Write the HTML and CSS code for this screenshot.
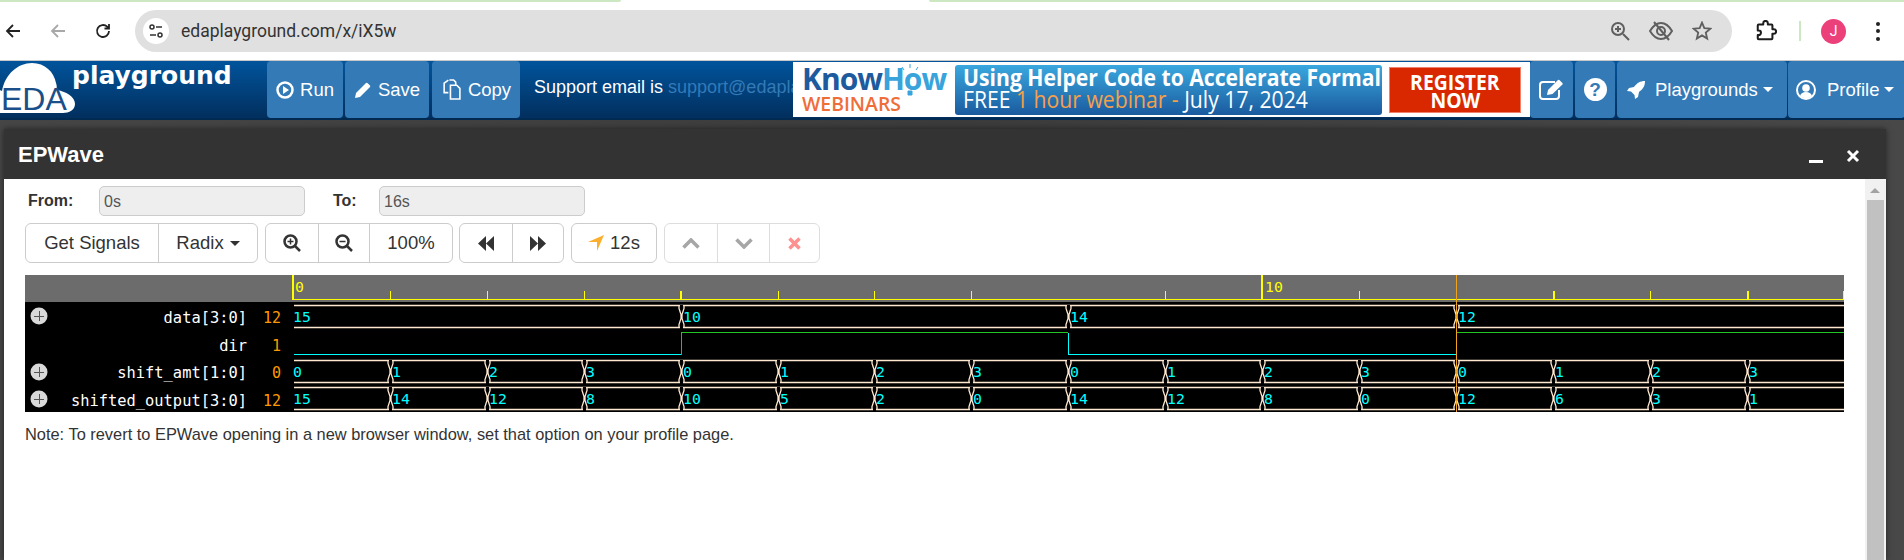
FILE: index.html
```html
<!DOCTYPE html>
<html lang="en">
<head>
<meta charset="utf-8">
<title>EPWave</title>
<link rel="stylesheet" href="styles.css">
</head>
<body>
<div class="strip"><span class="strip-l"></span><span class="strip-m"></span><span class="strip-r"></span></div>
<header class="toolbar">
  <svg class="tool" viewBox="0 0 18 18"><path d="M16 9H3M9 3L3 9l6 6" class="st-dark"/></svg>
  <svg class="tool" viewBox="0 0 18 18"><path d="M16 9H3M9 3L3 9l6 6" class="st-grey"/></svg>
  <svg class="tool" viewBox="0 0 18 18"><path d="M15 9a6 6 0 1 1-1.8-4.3L15 6.500M15 2v4.500h-4.500" class="st-dark"/></svg>
  <div class="omnibox">
    <span class="chip"><svg viewBox="0 0 16 16" width="16" height="16"><circle cx="4" cy="4" r="2" class="st-thin"/><path d="M8 4h6M2 12h6" class="st-thin"/><circle cx="12" cy="12" r="2" class="st-thin"/></svg></span>
    <span class="url">edaplayground.com/x/iX5w</span>
    <span class="omni-icons">
      <svg width="20" height="20" viewBox="0 0 20 20"><circle cx="8" cy="8" r="6" class="st-omni"/><path d="M13 13l6 6M8 5v6M5 8h6" class="st-omni"/></svg>
      <svg width="24" height="20" viewBox="0 0 24 20"><path d="M1 10c3-5 7-8 11-8s8 3 11 8c-3 5-7 8-11 8s-8-3-11-8z" class="st-omni"/><circle cx="12" cy="10" r="4" class="st-omni"/><path d="M5 1l15 18" class="st-omni"/></svg>
      <svg width="20" height="20" viewBox="0 0 24 24"><path d="M22 9.240l-7.190-.62L12 2 9.190 8.630 2 9.240l5.460 4.730L5.820 21 12 17.270 18.180 21l-1.630-7.030L22 9.240z" class="st-omni2"/></svg>
    </span>
  </div>
  <svg class="ext" viewBox="0 0 24 24"><path d="M9 5V3.500a2.500 2.500 0 0 1 5 0V5h4a1 1 0 0 1 1 1v4h1.500a2.500 2.500 0 0 1 0 5H19v5a1 1 0 0 1-1 1H4a1 1 0 0 1-1-1v-3.500h1a2.500 2.500 0 0 0 0-5H3V6a1 1 0 0 1 1-1z" class="st-ext"/></svg>
  <span class="divider"></span>
  <span class="avatar">J</span>
  <span class="dots"><i></i><i></i><i></i></span>
</header>

<nav class="nav">
  <div class="logo">
    <svg class="cloud" viewBox="0 0 76 52" width="76" height="52">
      <path d="M-6 51c-6-2-8-12-4-18 2-4 8-6 12-4C5 12 18 1 32 1c13 0 22 9 24 20 1 3 1 5 0 7 10 1 19 7 19 14 0 6-6 9-12 9z" class="cloud-fill"/>
      <text x="1" y="48" class="eda">EDA</text>
    </svg>
    <span class="wordmark">playground</span>
  </div>
  <a class="nav-btn run"><svg width="18" height="18" viewBox="0 0 18 18"><circle cx="9" cy="9" r="7.500" class="st-white-b"/><path d="M7 5l6 4-6 4z" class="fl-white"/></svg>Run</a>
  <a class="nav-btn save"><svg width="18" height="18" viewBox="0 0 18 18"><path d="M1 17l1-5L12 2a1 1 0 0 1 1.400 0l2.600 2.600a1 1 0 0 1 0 1.400L6 16z" class="fl-white"/></svg>Save</a>
  <a class="nav-btn copy"><svg width="21" height="21" viewBox="0 0 20 20"><path d="M8 1h4l2 2v3M7 1L3 4v9h4" class="st-white1"/><path d="M9 6h6l3 3v10H9z" class="st-white1"/></svg>Copy</a>
  <div class="support">Support email is <a class="support-link">support@edapla</a></div>
  <div class="banner">
    <div class="brand">
      <div class="knowhow">Know<b>How</b>
        <svg class="bulb" viewBox="0 0 24 34" width="24" height="34"><path d="M12 0v4M4 3l2 3M20 3l-2 3M10 27h4v4h-4z" class="bulb-mark"/></svg>
      </div>
      <div class="webinars">WEBINARS</div>
    </div>
    <div class="promo">
      <div class="promo-a">Using Helper Code to Accelerate Formal</div>
      <div class="promo-b">FREE <em>1 hour webinar -</em> July 17, 2024</div>
    </div>
    <div class="register"><span>REGISTER</span><span>NOW</span></div>
  </div>
  <a class="nav-btn edit"><svg width="27" height="22" viewBox="0 0 27 22"><path d="M21 11v6a3 3 0 0 1-3 3H5a3 3 0 0 1-3-3V6a3 3 0 0 1 3-3h12" class="st-white"/><path d="M9 16l1-5L20 1a1 1 0 0 1 1.400 0l3 3a1 1 0 0 1 0 1.400L14.500 15z" class="fl-white"/></svg></a>
  <a class="nav-btn help"><span class="qmark">?</span></a>
  <a class="nav-btn play"><svg width="18" height="18" viewBox="0 0 18 18"><path d="M18 0c-5 0-8 2-11 6L2 7 0 10l4 .5L7.500 14l.5 4 3-2 1-5c4-3 6-6 6-11z" class="fl-white"/></svg><span class="play-t">Playgrounds</span><i class="caret-w"></i></a>
  <a class="nav-btn prof"><svg width="20" height="20" viewBox="0 0 20 20"><circle cx="10" cy="10" r="9" class="st-white"/><circle cx="10" cy="8" r="3.800" class="fl-white"/><path d="M4 16c1-3 3-4 6-4s5 1 6 4a9 9 0 0 1-12 0z" class="fl-white"/></svg><span class="prof-t">Profile</span><i class="caret-w"></i></a>
</nav>

<main class="backdrop">
  <section class="modal">
    <div class="modal-head">
      <h1>EPWave</h1>
      <span class="minimize"></span>
      <svg class="close" width="14" height="14" viewBox="0 0 14 14"><path d="M2 2l10 10M12 2L2 12"/></svg>
    </div>
    <div class="modal-body">
      <div class="content">
        <div class="range">
          <label class="from">From:</label><input class="field" value="0s" readonly>
          <label class="to">To:</label><input class="field" value="16s" readonly>
        </div>
        <div class="controls">
          <div class="group">
            <button class="w132">Get Signals</button>
            <button class="w99">Radix<i class="caret-d"></i></button>
          </div>
          <div class="group">
            <button class="w52"><svg width="18" height="18" viewBox="0 0 18 18"><circle cx="7.500" cy="7.500" r="6" class="st-ic"/><path d="M12 12l5 5" class="st-ic"/><path d="M7.500 4.500v6M4.500 7.500h6" class="st-ic1"/></svg></button>
            <button class="w51"><svg width="18" height="18" viewBox="0 0 18 18"><circle cx="7.500" cy="7.500" r="6" class="st-ic"/><path d="M12 12l5 5" class="st-ic"/><path d="M4.500 7.500h6" class="st-ic1"/></svg></button>
            <button class="w83">100%</button>
          </div>
          <div class="group group-tight">
            <button class="w52"><svg width="18" height="15" viewBox="0 0 18 15"><path d="M9 0v15L1 7.500zM17 0v15L9 7.500z" class="fl-ic"/></svg></button>
            <button class="w51"><svg width="18" height="15" viewBox="0 0 18 15"><path d="M1 0v15l8-7.500zM9 0v15l8-7.500z" class="fl-ic"/></svg></button>
          </div>
          <div class="group">
            <button class="w84 cursor-btn"><svg width="16" height="16" viewBox="0 0 16 16"><path d="M16 0L9 16V7H0z" class="fl-or"/></svg>12s</button>
          </div>
          <div class="group faded">
            <button class="w52"><svg width="18" height="11" viewBox="0 0 18 11"><path d="M1.500 9.500L9 2l7.500 7.500" class="st-chev"/></svg></button>
            <button class="w52"><svg width="18" height="11" viewBox="0 0 18 11"><path d="M1.500 1.500L9 9l7.500-7.500" class="st-chev"/></svg></button>
            <button class="w50"><svg width="13" height="13" viewBox="0 0 13 13"><path d="M1.500 1.500l10 10M11.500 1.500l-10 10" class="st-x"/></svg></button>
          </div>
        </div>
        <svg class="wave" width="1819" height="137" viewBox="25 275 1819 137">
          <defs>
            <g id="tr">
              <rect x="-1" y="-1" width="3" height="24" class="w-bg"/>
              <path d="M-2 0V3L-1 6 0 9V13L-1 16-2 19V22M3 0V3L2 6 1 9V13L2 16 3 19V22" class="w-bus"/>
            </g>
          </defs>
          <rect x="25" y="275" width="1819" height="27" class="w-ruler"/>
          <rect x="25" y="302" width="1819" height="110" class="w-bg"/>
          <path d="M293 299.500H1844M390 291V299M487 291V299M584 291V299M778 291V299M874 291V299M971 291V299M1165 291V299M1359 291V299M1650 291V299M1843.500 291V299" class="w-tick"/>
          <path d="M293 275V300M681 291V299M1262 275V299M1553.500 291V299M1748 291V299" class="w-tick2"/>
          <text x="295" y="292" class="w-rtext">0</text>
          <text x="1265" y="292" class="w-rtext">10</text>

          <circle cx="39" cy="316" r="8.500" class="w-plus"/><path d="M34 316h10M39 311v10" class="w-pluss"/>
          <circle cx="39" cy="372" r="8.500" class="w-plus"/><path d="M34 372h10M39 367v10" class="w-pluss"/>
          <circle cx="39" cy="399" r="8.500" class="w-plus"/><path d="M34 399h10M39 394v10" class="w-pluss"/>

          <text x="247" y="323" class="w-name">data[3:0]</text>
          <text x="247" y="351" class="w-name">dir</text>
          <text x="247" y="378" class="w-name">shift_amt[1:0]</text>
          <text x="247" y="406" class="w-name">shifted_output[3:0]</text>
          <text x="281" y="323" class="w-val">12</text>
          <text x="281" y="351" class="w-val">1</text>
          <text x="281" y="378" class="w-val">0</text>
          <text x="281" y="406" class="w-val">12</text>

          <path d="M294 305.500H1844M294 327.500H1844M294 360.500H1844M294 382.500H1844M294 387.500H1844M294 409.500H1844" class="w-bus"/>
          <use href="#tr" x="681" y="305.500"/><use href="#tr" x="1068" y="305.500"/><use href="#tr" x="1456" y="305.500"/>
          <use href="#tr" x="390" y="360.500"/><use href="#tr" x="487" y="360.500"/><use href="#tr" x="584" y="360.500"/><use href="#tr" x="681" y="360.500"/><use href="#tr" x="778" y="360.500"/><use href="#tr" x="874" y="360.500"/><use href="#tr" x="971" y="360.500"/><use href="#tr" x="1068" y="360.500"/><use href="#tr" x="1165" y="360.500"/><use href="#tr" x="1262" y="360.500"/><use href="#tr" x="1359" y="360.500"/><use href="#tr" x="1456" y="360.500"/><use href="#tr" x="1553" y="360.500"/><use href="#tr" x="1650" y="360.500"/><use href="#tr" x="1747" y="360.500"/>
          <use href="#tr" x="390" y="387.500"/><use href="#tr" x="487" y="387.500"/><use href="#tr" x="584" y="387.500"/><use href="#tr" x="681" y="387.500"/><use href="#tr" x="778" y="387.500"/><use href="#tr" x="874" y="387.500"/><use href="#tr" x="971" y="387.500"/><use href="#tr" x="1068" y="387.500"/><use href="#tr" x="1165" y="387.500"/><use href="#tr" x="1262" y="387.500"/><use href="#tr" x="1359" y="387.500"/><use href="#tr" x="1456" y="387.500"/><use href="#tr" x="1553" y="387.500"/><use href="#tr" x="1650" y="387.500"/><use href="#tr" x="1747" y="387.500"/>

          <path d="M294 354.500H681M1068 332.500V354.500H1457" class="w-low"/>
          <path d="M681 354.500V332.500H1068M1456 332.500H1844" class="w-high"/>

          <g class="w-data">
            <text x="293" y="322">15</text><text x="683" y="322">10</text><text x="1070" y="322">14</text><text x="1458" y="322">12</text>
            <text x="293" y="377">0</text><text x="392" y="377">1</text><text x="489" y="377">2</text><text x="586" y="377">3</text><text x="683" y="377">0</text><text x="780" y="377">1</text><text x="876" y="377">2</text><text x="973" y="377">3</text><text x="1070" y="377">0</text><text x="1167" y="377">1</text><text x="1264" y="377">2</text><text x="1361" y="377">3</text><text x="1458" y="377">0</text><text x="1555" y="377">1</text><text x="1652" y="377">2</text><text x="1749" y="377">3</text>
            <text x="293" y="404">15</text><text x="392" y="404">14</text><text x="489" y="404">12</text><text x="586" y="404">8</text><text x="683" y="404">10</text><text x="780" y="404">5</text><text x="876" y="404">2</text><text x="973" y="404">0</text><text x="1070" y="404">14</text><text x="1167" y="404">12</text><text x="1264" y="404">8</text><text x="1361" y="404">0</text><text x="1458" y="404">12</text><text x="1555" y="404">6</text><text x="1652" y="404">3</text><text x="1749" y="404">1</text>
          </g>
          <path d="M1456.500 275V412" class="w-cursor"/>
        </svg>
        <p class="note">Note: To revert to EPWave opening in a new browser window, set that option on your profile page.</p>
      </div>
      <div class="scrollbar"><i class="sb-up"></i><div class="sb-thumb"></div></div>
    </div>
  </section>
</main>
</body>
</html>
```
FILE: styles.css
```css
* { box-sizing: border-box; }
html, body { margin: 0; padding: 0; }
body { width: 1904px; height: 560px; overflow: hidden; background: #fff; font-family: "Liberation Sans", Arial, sans-serif; color: #333; }

/* browser chrome */
.strip { display: flex; height: 2px; }
.strip-l { width: 621px; background: #cbe8c2; border-bottom-right-radius: 2px; }
.strip-m { width: 308px; background: #fff; }
.strip-r { flex: 1; background: #cbe8c2; border-bottom-left-radius: 2px; }
.toolbar { display: flex; align-items: center; height: 59px; padding-left: 4px; background: #fff; border-bottom: 1px solid #c8c8c8; }
.tool { width: 18px; height: 18px; margin-right: 27px; flex: none; }
.tool:nth-of-type(3) { margin-right: 23px; }
.st-dark, .st-grey { fill: none; stroke-width: 1.800; }
.st-dark { stroke: #222; }
.st-grey { stroke: #a8a8a8; }
.omnibox { display: flex; align-items: center; width: 1597px; height: 42px; padding-left: 8px; border-radius: 21px; background: #e0e0e0; flex: none; }
.chip { display: flex; align-items: center; justify-content: center; width: 26px; height: 26px; border-radius: 50%; background: #fff; }
.st-thin { fill: none; stroke: #333; stroke-width: 1.500; }
.url { margin-left: 12px; font-family: Roboto, sans-serif; font-size: 17.500px; color: #333; }
.omni-icons { display: flex; align-items: center; gap: 19px; margin-left: auto; margin-right: 20px; }
.st-omni { fill: none; stroke: #5f5f5f; stroke-width: 2; }
.st-omni2 { fill: none; stroke: #5f5f5f; stroke-width: 2.200; }
.ext { width: 22px; height: 22px; margin-left: 23px; flex: none; }
.st-ext { fill: none; stroke: #1c1c1c; stroke-width: 2.200; stroke-linejoin: round; }
.divider { width: 2px; height: 20px; margin-left: 22px; background: #cbe8c2; }
.avatar { display: flex; align-items: center; justify-content: center; width: 25px; height: 25px; margin-left: 20px; border-radius: 50%; background: #ec407a; color: #fff; font-family: Roboto, sans-serif; font-size: 14px; }
.dots { display: flex; flex-direction: column; gap: 3.500px; margin-left: 30px; }
.dots i { display: block; width: 4px; height: 4px; border-radius: 50%; background: #222; }

/* site navbar */
.nav { display: flex; height: 59px; background: linear-gradient(#01549c, #022f5e); border-bottom: 2px solid #012a52; }
.logo { position: relative; width: 267px; flex: none; }
.cloud { position: absolute; left: 0; top: 1px; overflow: visible; }
.cloud-fill { fill: #fff; }
.eda { font-family: "Liberation Sans", sans-serif; font-size: 32px; fill: #1a4f8a; }
.wordmark { position: absolute; left: 72px; top: -1px; font-family: "DejaVu Sans", sans-serif; font-weight: 700; font-size: 25px; line-height: 32px; color: #fff; }
.nav-btn { display: flex; align-items: center; justify-content: center; gap: 6px; height: 57px; background: #337ab7; border-radius: 4px; color: #fff; font-size: 18.500px; flex: none; }
.st-white { fill: none; stroke: #fff; stroke-width: 2; }
.st-white-b { fill: none; stroke: #fff; stroke-width: 2.500; }
.st-white1 { fill: none; stroke: #fff; stroke-width: 1.500; }
.fl-white { fill: #fff; }
.run { width: 76px; }
.save { width: 84px; margin-left: 2px; }
.copy { width: 88px; margin-left: 3px; }
.support { width: 273px; padding: 14px 0 0 14px; overflow: hidden; white-space: nowrap; color: #fff; font-size: 18px; line-height: 24px; flex: none; }
.support-link { color: #337ab7; }
.banner { display: flex; width: 737px; height: 55px; margin-top: 1px; background: #fff; flex: none; }
.brand { width: 162px; padding-left: 9px; flex: none; }
.knowhow { position: relative; font-family: "Open Sans", sans-serif; font-weight: 700; font-size: 30px; line-height: 33px; letter-spacing: -1px; color: #1d5a9e; white-space: nowrap; }
.knowhow b { font-weight: 700; color: #39a3dc; }
.bulb { position: absolute; left: 96px; top: 2px; }
.bulb-mark { fill: #39a3dc; stroke: #39a3dc; stroke-width: 1; }
.webinars { margin-top: -2px; width: max-content; font-family: "Open Sans", sans-serif; font-weight: 600; font-size: 20px; line-height: 21px; color: #ef6d38; transform: scaleX(.97); transform-origin: left; }
.promo { width: 427px; height: 50px; margin-top: 3px; padding-left: 8px; border-radius: 3px; background: linear-gradient(#3aa8de, #1a5a9f); color: #fff; white-space: nowrap; font-family: "Open Sans", sans-serif; flex: none; }
.promo-a { width: max-content; font-weight: 700; font-size: 23px; line-height: 25px; transform: scaleX(.92); transform-origin: left; }
.promo-b { width: max-content; font-size: 23px; line-height: 19px; transform: scaleX(.92); transform-origin: left; }
.promo-b em { font-style: normal; color: #f5a04a; }
.register { display: flex; flex-direction: column; align-items: center; justify-content: center; width: 132px; height: 46px; margin: 5px 0 0 7px; border: 1px solid #f0816a; background: #d92800; color: #fff; font-family: "Open Sans", sans-serif; font-weight: 700; font-size: 22px; line-height: 18px; flex: none; }
.register span { display: block; transform: scaleX(.88); }
.edit { width: 43px; }
.help { width: 40px; margin-left: 2px; }
.qmark { display: flex; align-items: center; justify-content: center; width: 23px; height: 23px; border-radius: 50%; background: #fff; color: #337ab7; font-weight: 700; font-size: 19px; }
.play { width: 170px; margin-left: 2px; justify-content: flex-start; padding-left: 10px; gap: 0; }
.play-t { margin-left: 10px; }
.prof { width: 117px; margin-left: 1px; justify-content: flex-start; padding-left: 8px; gap: 0; }
.prof-t { margin-left: 11px; }
.caret-w { width: 0; height: 0; margin-left: 5px; border: 5px solid transparent; border-top-color: #fff; border-bottom: 0; }

/* dialog */
.backdrop { height: 440px; padding: 9px 18px 0 4px; overflow: hidden; background: linear-gradient(90deg, #464646, #3c3c3c 50%, #484848 99%); }
.modal { display: flex; flex-direction: column; height: 431px; box-shadow: 0 0 6px rgba(0,0,0,.5); }
.modal-head { display: flex; align-items: flex-start; height: 50px; background: #333; flex: none; }
.modal-head h1 { margin: 13px 0 0 14px; color: #fff; font-size: 22px; line-height: 25px; font-weight: 700; }
.minimize { width: 14px; height: 3px; margin: 31px 0 0 auto; background: #fff; }
.close { margin: 20px 26px 0 23px; }
.close path { fill: none; stroke: #fff; stroke-width: 3; }
.modal-body { display: flex; flex: 1; background: #fff; min-height: 0; overflow: hidden; }
.content { width: 1861px; padding: 7px 0 0 21px; flex: none; }
.range { display: flex; align-items: center; height: 30px; }
.from, .to { font-size: 16px; font-weight: 700; color: #333; }
.from { width: 74px; padding-left: 3px; }
.to { width: 46px; margin-left: 28px; }
.field { width: 206px; height: 30px; padding: 2px 4px 0; border: 1px solid #ccc; border-radius: 5px; background: #eee; color: #555; font: 16px "Liberation Sans", sans-serif; outline: 0; }
.controls { display: flex; gap: 7px; margin-top: 7px; }
.group { display: flex; height: 40px; border: 1px solid #ccc; border-radius: 6px; background: #fff; }
.group-tight { margin-left: -1px; }
.group button { display: flex; align-items: center; justify-content: center; height: 38px; padding: 0; border: 0; border-left: 1px solid #ccc; background: transparent; color: #333; font: 18.500px "Liberation Sans", sans-serif; }
.group button:first-child { border-left: 0; }
.faded { opacity: .65; }
.w132 { width: 132px; }
.w99 { width: 99px; }
.w52 { width: 52px; }
.w51 { width: 51px; }
.w83 { width: 83px; }
.w84 { width: 84px; }
.w50 { width: 50px; }
.caret-d { width: 0; height: 0; margin-left: 6px; border: 5.500px solid transparent; border-top-color: #333; border-bottom: 0; }
.cursor-btn { gap: 6px; }
.st-ic { fill: none; stroke: #333; stroke-width: 2.500; }
.st-ic1 { fill: none; stroke: #333; stroke-width: 1.500; }
.fl-ic { fill: #333; }
.fl-or { fill: #fbb02d; }
.st-chev { fill: none; stroke: #777; stroke-width: 3.500; }
.st-x { fill: none; stroke: #f55; stroke-width: 3.500; }

/* waveform */
.wave { display: block; margin-top: 12px; shape-rendering: crispEdges; }
.w-bg { fill: #000; }
.w-ruler { fill: #6c6c6c; }
.w-tick { fill: none; stroke: #ff0; stroke-width: 1; }
.w-tick2 { fill: none; stroke: #ff0; stroke-width: 2; }
.w-rtext { font: 14.800px "DejaVu Sans Mono", monospace; fill: #ff0; }
.w-plus { fill: #d9d9d9; shape-rendering: auto; }
.w-pluss { fill: none; stroke: #555; stroke-width: 1; }
.w-name { font: 15.400px "DejaVu Sans Mono", monospace; fill: #fff; text-anchor: end; }
.w-val { font: 15px "DejaVu Sans Mono", monospace; fill: #f90; text-anchor: end; }
.w-bus { fill: none; stroke: #ffe8cf; stroke-width: 1.300; shape-rendering: auto; }
.w-low { fill: none; stroke: #0ff; stroke-width: 1; }
.w-high { fill: none; stroke: #22c522; stroke-width: 1; }
.w-data text { font: 14.800px "DejaVu Sans Mono", monospace; fill: #0ff; }
.w-cursor { fill: none; stroke: #f2a31e; stroke-width: 1; }
.note { margin: 12px 0 0; font-size: 16.400px; line-height: 20px; color: #333; }

.scrollbar { position: relative; width: 21px; background: #f1f1f1; flex: none; padding: 21px 2px 0; }
.sb-up { position: absolute; left: 5px; top: 9px; width: 0; height: 0; border: 5px solid transparent; border-bottom: 5px solid #a3a3a3; border-top: 0; }
.sb-thumb { height: 360px; background: #c1c1c1; }
```
